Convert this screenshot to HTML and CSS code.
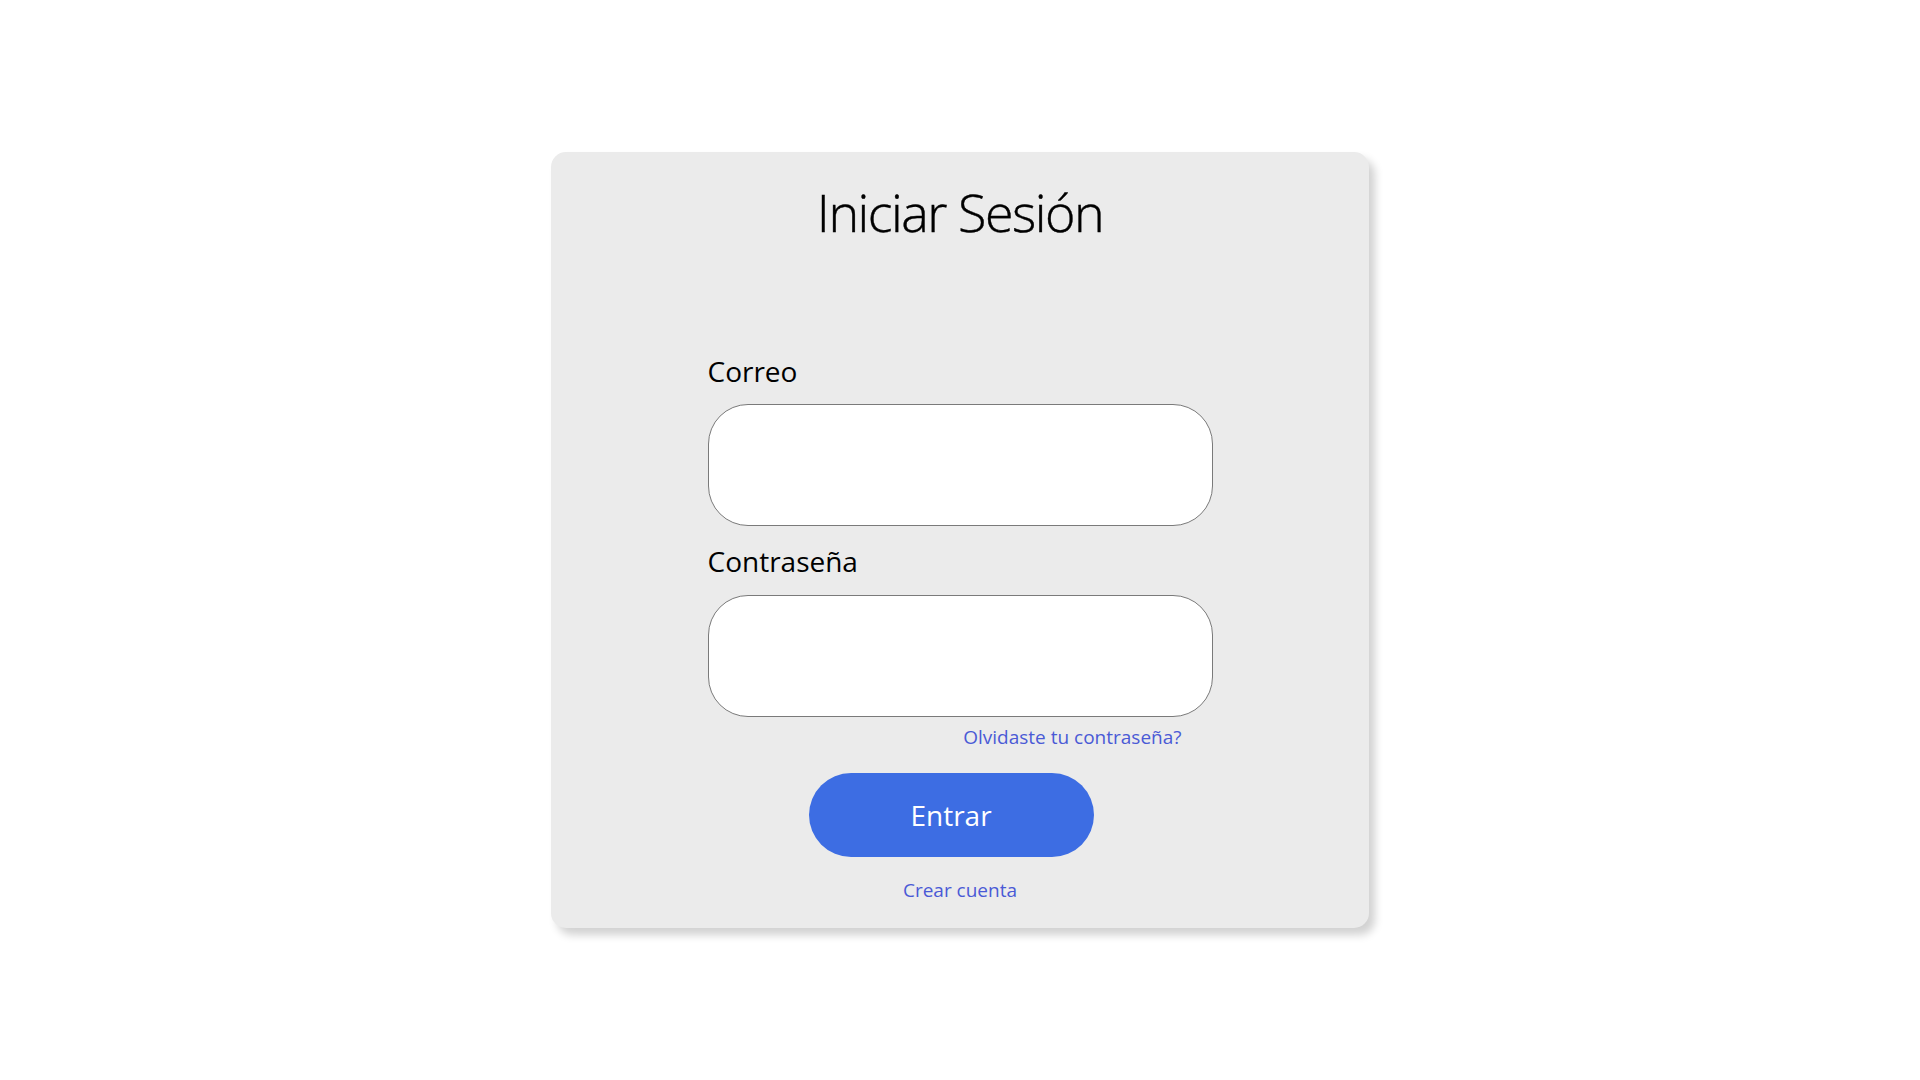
FILE: index.html
```html
<!DOCTYPE html>
<html lang="es">
<head>
<meta charset="utf-8">
<title>Iniciar Sesión</title>
<link rel="stylesheet" href="styles.css">
</head>
<body>
<main class="card">
  <h1 class="title">Iniciar Sesión</h1>
  <form class="form">
    <label class="label" for="correo">Correo</label>
    <input class="field" id="correo" type="email">
    <label class="label label-second" for="pass">Contraseña</label>
    <input class="field" id="pass" type="password">
    <a class="forgot" href="#">Olvidaste tu contraseña?</a>
    <button class="btn" type="button">Entrar</button>
    <a class="create" href="#">Crear cuenta</a>
  </form>
</main>
</body>
</html>
```

FILE: styles.css
```css
html, body {
  margin: 0;
  padding: 0;
  background: #ffffff;
}
body {
  height: 100vh;
  display: flex;
  align-items: center;
  justify-content: center;
  font-family: "Open Sans", "Noto Sans", sans-serif;
  color: #000;
}
.card {
  width: 818px;
  height: 776px;
  box-sizing: border-box;
  padding-top: 28px;
  background: #ebebeb;
  border-radius: 15px;
  box-shadow: 6px 7px 9px rgba(0, 0, 0, 0.18);
  display: flex;
  flex-direction: column;
  align-items: center;
}
.title {
  margin: 0;
  font-size: 52px;
  line-height: 64px;
  font-weight: 300;
  letter-spacing: -1.5px;
  -webkit-text-stroke: 0.4px #000;
}
.form {
  margin-top: 111px;
  width: 505px;
  display: flex;
  flex-direction: column;
}
.label {
  font-size: 28px;
  line-height: 32px;
  margin-bottom: 17px;
}
.label-second {
  margin-top: 19px;
  margin-bottom: 18px;
}
.field {
  box-sizing: border-box;
  width: 505px;
  height: 122px;
  margin: 0;
  border: 1px solid #7a7a7a;
  border-radius: 40px;
  background: #ffffff;
  font-family: inherit;
  font-size: 22px;
  padding: 0 30px;
  outline: none;
}
.forgot {
  margin-top: 8px;
  align-self: flex-end;
  margin-right: 31px;
  font-size: 19px;
  line-height: 24px;
  color: #4a5ad6;
  text-decoration: none;
}
.btn {
  margin-top: 24px;
  margin-left: 101px;
  width: 285px;
  height: 84px;
  border: none;
  border-radius: 42px;
  background: #3d6de3;
  color: #ffffff;
  font-family: inherit;
  font-size: 28px;
  padding: 0;
  cursor: pointer;
}
.create {
  margin-top: 21px;
  align-self: center;
  font-size: 19px;
  line-height: 24px;
  color: #4a5ad6;
  text-decoration: none;
}
```
